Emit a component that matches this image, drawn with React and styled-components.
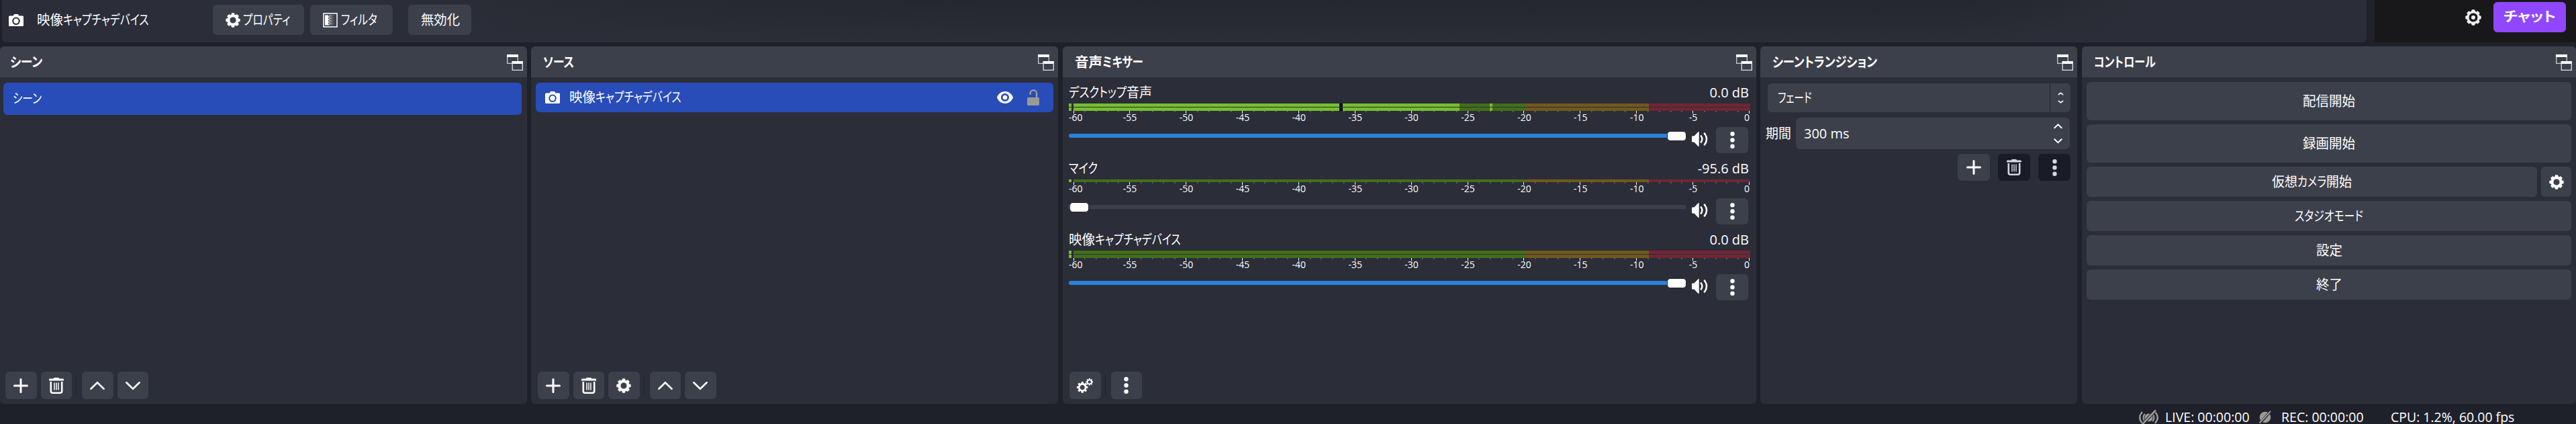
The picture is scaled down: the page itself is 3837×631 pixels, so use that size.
import React, { useLayoutEffect, useRef, useState } from 'react';
import styled, { createGlobalStyle } from 'styled-components';

const c = {
  window: '#1f212a',
  panel: '#2b2d38',
  button: '#3c404b',
  dark: '#191b26',
  accent: '#284cb8',
  slider: '#2a82da',
  text: '#ffffff',
  muted: '#9a9996',
};

const GlobalStyle = createGlobalStyle`
  * { box-sizing: border-box; }
  body {
    margin: 0;
    background: ${c.window};
    color: ${c.text};
    font-family: "Open Sans", "Noto Sans CJK JP", sans-serif;
    font-size: 20px;
    line-height: 20px;
    overflow: hidden;
  }
`;

/* ---------- text ---------- */

const Line = styled.span`
  display: flex;
  flex: none;
  white-space: nowrap;
  font-weight: ${(p) => (p.$bold ? 700 : 400)};
  margin-left: ${(p) => p.$left || 0}px;
`;

const Slot = styled.span`
  flex: none;
  width: ${(p) => p.$width}px;
`;

const Glyphs = styled.span`
  display: inline-block;
  transform-origin: 0 50%;
  font-feature-settings: "palt";
`;

function Run({ text, width }) {
  const ref = useRef(null);
  const [scale, setScale] = useState(1);
  useLayoutEffect(() => {
    setScale(width / ref.current.offsetWidth);
  }, [text, width]);
  return (
    <Slot $width={width}>
      <Glyphs ref={ref} style={{ transform: `scaleX(${scale})` }}>{text}</Glyphs>
    </Slot>
  );
}

function Label({ runs, bold, left }) {
  return (
    <Line $bold={bold} $left={left}>
      {runs.map(([text, width]) => <Run key={text} text={text} width={width} />)}
    </Line>
  );
}

/* ---------- icons ---------- */

const Svg = styled.svg`
  display: block;
  flex: none;
  overflow: visible;
`;

function gearPath(cx, cy, outer, root, hole) {
  const pts = [];
  const teeth = 8;
  for (let i = 0; i < teeth; i += 1) {
    const a = (i * 2 * Math.PI) / teeth - Math.PI / 2;
    [[-0.27, root], [-0.17, outer], [0.17, outer], [0.27, root]].forEach(([d, r]) => {
      pts.push(`${(cx + r * Math.cos(a + d)).toFixed(2)} ${(cy + r * Math.sin(a + d)).toFixed(2)}`);
    });
  }
  const ring = `M${cx - hole} ${cy}a${hole} ${hole} 0 1 0 ${hole * 2} 0a${hole} ${hole} 0 1 0 ${-hole * 2} 0Z`;
  return `M${pts.join('L')}Z${ring}`;
}

const Gear = ({ size = 22 }) => (
  <Svg width={size} height={size} viewBox="0 0 22 22">
    <path fill="#fff" fillRule="evenodd" stroke="#fff" strokeWidth=".8" strokeLinejoin="round" d={gearPath(11, 11, 10.4, 8.2, 5)} />
  </Svg>
);

const Gears = () => (
  <Svg width="24" height="22" viewBox="0 0 24 22">
    <path fill="#fff" fillRule="evenodd" d={gearPath(8.2, 13.4, 8.4, 6.3, 3.5)} />
    <path fill="#fff" fillRule="evenodd" d={gearPath(18.8, 5.4, 5.4, 4, 2.2)} />
  </Svg>
);

const ChatGear = () => (
  <Svg width="24" height="24" viewBox="0 0 24 24">
    <path fill="#efeff1" fillRule="evenodd" stroke="#efeff1" strokeWidth="1" strokeLinejoin="round" d={gearPath(12, 12, 11.3, 9.3, 7)} />
    <circle cx="12" cy="12" r="3" fill="#efeff1" />
  </Svg>
);

const Camera = () => (
  <Svg width="22" height="18" viewBox="0 0 22 18">
    <path fill="#fff" fillRule="evenodd" d="M6.5 2.500L8 .3Q8.300 0 8.800 0h4.400q.5 0 .8.300L15.500 2.500H20.500Q22 2.500 22 4v12.500Q22 18 20.500 18h-19Q0 18 0 16.500V4Q0 2.500 1.500 2.500ZM5.200 10.300a5.800 5.800 0 1 0 11.600 0a5.800 5.800 0 1 0-11.600 0Z" />
    <circle cx="11" cy="10.300" r="3.700" fill="#fff" />
  </Svg>
);

const Filter = () => (
  <Svg width="22" height="22" viewBox="0 0 22 22">
    <rect x="1" y="1" width="20" height="20" fill="none" stroke="#fff" strokeWidth="1.500" />
    <rect x="3" y="3.500" width="5" height="15" fill="#fff" />
    {[0, 1, 2, 3, 4, 5, 6, 7].map((r) => (
      <g key={r} fill="#fff">
        <rect x={r % 2 ? 8 : 9.500} y={3.500 + r * 1.900} width="1.700" height="1.700" opacity=".9" />
        <rect x={r % 2 ? 11 : 12.500} y={3.500 + r * 1.900} width="1.500" height="1.500" opacity=".6" />
        <rect x={r % 2 ? 14 : 15.300} y={3.500 + r * 1.900} width="1.300" height="1.300" opacity=".3" />
      </g>
    ))}
  </Svg>
);

const Popout = () => (
  <Svg width="24" height="24" viewBox="0 0 24 24">
    <path fill="none" stroke="#c9cbd0" strokeWidth="1.300" d="M.7 1v12.400H8M16.300 1v9" />
    <path fill="#fff" d="M0 0h17v4H0zM7.500 10H24v4H7.500z" />
    <path fill="none" stroke="#e2e3e6" strokeWidth="1.300" d="M8.200 12v11.300h15.100V12" />
  </Svg>
);

const Eye = () => (
  <Svg width="24" height="18" viewBox="0 0 24 18">
    <path fill="#fff" fillRule="evenodd" d="M12 0C18 0 22.300 4 24 9C22.300 14 18 18 12 18S1.700 14 0 9C1.700 4 6 0 12 0ZM5.900 9a6.100 6.100 0 1 0 12.200 0a6.100 6.100 0 1 0-12.200 0Z" />
    <circle cx="12" cy="9" r="3.300" fill="#fff" />
  </Svg>
);

const Unlock = () => (
  <Svg width="18" height="24" viewBox="0 0 18 24">
    <rect y="12" width="18" height="12" rx="1.500" fill={c.muted} />
    <path fill="none" stroke={c.muted} strokeWidth="2.600" d="M4.500 8V5.800a4.800 4.500 0 0 1 9.600 0V13" />
  </Svg>
);

const Plus = () => (
  <Svg width="22" height="22" viewBox="0 0 22 22">
    <path stroke="#fff" strokeWidth="3" strokeLinecap="round" d="M11 1.500v19M1.500 11h19" />
  </Svg>
);

const Trash = ({ color = '#fff' }) => (
  <Svg width="22" height="24" viewBox="0 0 22 24">
    <path fill={color} d="M6.500 1.500L8 0h6l1.500 1.500H21q1 0 1 1.500v1.500H0V3q0-1.500 1-1.500Z" />
    <path fill="none" stroke={color} strokeWidth="2.600" d="M2.800 6v14q0 2.800 2.800 2.800h10.800q2.800 0 2.800-2.800V6" />
    <path stroke={color} strokeWidth="1.500" d="M8 7.500v11M11 7.500v11M14 7.500v11" />
  </Svg>
);

const Dots = ({ color = '#fff' }) => (
  <Svg width="7" height="25" viewBox="0 0 7 25">
    {[3.3, 12.5, 21.7].map((y) => <circle key={y} cx="3.500" cy={y} r="3.200" fill={color} />)}
  </Svg>
);

const Chevron = ({ down, width = 22, height = 12, weight = 2.6 }) => (
  <Svg width={width} height={height}>
    <path
      fill="none"
      stroke="#fff"
      strokeWidth={weight}
      strokeLinecap="round"
      d={down
        ? `M1.300 1.300L${width / 2} ${height - 1.3}L${width - 1.3} 1.300`
        : `M1.300 ${height - 1.3}L${width / 2} 1.300L${width - 1.3} ${height - 1.3}`}
    />
  </Svg>
);

const Speaker = () => (
  <Svg width="24" height="22" viewBox="0 0 24 22">
    <path fill="#fff" d="M0 7.500Q0 6.500 1 6.500H3.500L9.500.3Q10.700-.3 10.700 1v20q0 1.300-1.200.7L3.500 15.500H1Q0 15.500 0 14.500Z" />
    <path fill="none" stroke="#fff" strokeWidth="2.500" d="M13.200 5.500q4.300 5.500 0 11M18.300 1.800q7.500 9.200 0 18.400" />
  </Svg>
);

const LiveOff = () => (
  <Svg width="29" height="22" viewBox="0 0 29 22">
    <g fill="none" stroke={c.muted} strokeWidth="2.300">
      <path d="M5 3q-7.500 8.500 0 17M8.800 6q-4.500 5.500 0 11M24 3q7.500 8.500 0 17M20.200 6q4.500 5.500 0 11" />
    </g>
    <circle cx="14.500" cy="11.500" r="6" fill={c.muted} />
    <path stroke={c.window} strokeWidth="4.600" d="M5 22L25 0" />
    <path stroke={c.muted} strokeWidth="2.600" d="M4 22.500L25 .5" />
  </Svg>
);

const RecOff = () => (
  <Svg width="18" height="18" viewBox="0 0 18 18">
    <circle cx="9" cy="9" r="8.300" fill={c.muted} />
    <path stroke={c.window} strokeWidth="3.800" d="M1 18L17 0" />
    <path stroke={c.muted} strokeWidth="2" d="M.5 17.500L17 0" />
  </Svg>
);

/* ---------- frame ---------- */

const Window = styled.div`
  display: flex;
  flex-direction: column;
  width: 3837px;
  height: 631px;
  overflow: hidden;
  background: ${c.window};
`;

const TopRow = styled.div`
  display: flex;
  height: 63px;
  padding-left: 3px;
`;

const SourceBar = styled.div`
  display: flex;
  align-items: flex-start;
  width: 3522px;
  padding: 7px 0 0 10px;
  border-radius: 0 0 6px 6px;
  background:
    linear-gradient(to bottom, transparent, ${c.panel}),
    linear-gradient(to right, ${c.panel} 560px, #272a31 1000px, #24272d 1500px, #24272d 2900px, ${c.panel} 3200px);
`;

const SourceTitle = styled.div`
  display: flex;
  align-items: center;
  gap: 20px;
  width: 304px;
  height: 45px;
`;

const ToolButton = styled.div`
  display: flex;
  align-items: center;
  width: ${(p) => p.$width}px;
  height: 45px;
  margin-right: ${(p) => p.$after || 0}px;
  padding-left: 19px;
  gap: 4px;
  border-radius: 6px;
  background: ${c.button};
`;

const ChatArea = styled.div`
  display: flex;
  justify-content: flex-end;
  width: 300px;
  margin-left: auto;
  padding: 3px 15px 0 0;
  gap: 18px;
  background: #18181a;
`;

const ChatIcon = styled.div`
  padding-top: 11px;
`;

const ChatButton = styled.div`
  display: flex;
  align-items: center;
  justify-content: center;
  width: 108px;
  height: 45px;
  padding-bottom: 2px;
  border-radius: 6px;
  background: #9147ff;
`;

const Docks = styled.div`
  display: flex;
  height: 532px;
  margin-top: 6px;
  gap: 6px;
`;

const DockBox = styled.section`
  display: flex;
  flex: none;
  flex-direction: column;
  width: ${(p) => p.$width}px;
  margin-left: ${(p) => p.$before || 0}px;
  border-radius: 6px;
  overflow: hidden;
  background: ${c.panel};
`;

const DockHeader = styled.header`
  display: flex;
  align-items: center;
  justify-content: space-between;
  height: 46px;
  padding: 1px 6px 0 ${(p) => p.$left}px;
  background: ${c.button};
`;

const DockBody = styled.div`
  display: flex;
  flex: 1;
  flex-direction: column;
  padding: ${(p) => p.$pad};
`;

function Dock({ width, before, title, left = 18, pad, children }) {
  return (
    <DockBox $width={width} $before={before}>
      <DockHeader $left={left}>
        <Label bold runs={title} />
        <Popout />
      </DockHeader>
      <DockBody $pad={pad}>{children}</DockBody>
    </DockBox>
  );
}

const Item = styled.div`
  display: flex;
  align-items: center;
  height: ${(p) => p.$height}px;
  padding: 0 21px 0 14px;
  border-radius: 6px;
  background: ${c.accent};
`;

const ItemTools = styled.div`
  display: flex;
  align-items: center;
  gap: 21px;
  margin-left: auto;
`;

const Toolbar = styled.div`
  display: flex;
  align-items: center;
  gap: 6px;
  height: 41px;
  margin-top: auto;
  padding-left: ${(p) => p.$left}px;
`;

const IconButton = styled.div`
  display: flex;
  align-items: center;
  justify-content: center;
  flex: none;
  width: ${(p) => p.$width || 46.5}px;
  height: ${(p) => p.$height || 41}px;
  border-radius: 6px;
  background: ${(p) => (p.$dark ? c.dark : c.button)};
`;

const Divider = styled.div`
  width: 1px;
  height: 31px;
  margin: 0 2px 0 0;
  background: ${c.window};
`;

/* ---------- mixer ---------- */

const Channel = styled.div`
  display: flex;
  flex-direction: column;
  margin-bottom: 12px;
`;

const ChannelHead = styled.div`
  display: flex;
  align-items: center;
  justify-content: space-between;
  height: 27px;
  padding: 0 2px 5px 0;
`;

const ChannelFoot = styled.div`
  display: flex;
  height: 39px;
  margin-top: 3px;
`;

const Track = styled.div`
  display: flex;
  align-items: center;
  width: 920px;
  height: 14px;
  margin-top: ${(p) => p.$top}px;
`;

const Fill = styled.div`
  height: 6px;
  width: ${(p) => p.$width}px;
  border-radius: 3px 0 0 3px;
  background: ${c.slider};
`;

const Rest = styled.div`
  flex: 1;
  height: 6px;
  border-radius: 0 3px 3px 0;
  background: ${(p) => (p.$hidden ? 'transparent' : c.button)};
`;

const Handle = styled.div`
  width: 29px;
  height: 15px;
  border: 1px solid ${c.window};
  border-radius: 5px;
  background: #fff;
`;

const SpeakerBox = styled.div`
  width: 44px;
  padding: 7px 0 0 8px;
`;

const Scale = styled.svg`
  display: block;
  flex: none;
  font-family: "Open Sans", sans-serif;
  font-size: 14px;
`;

function Meter({ stereo, level, peak, mark }) {
  const rows = stereo ? [[0, 5], [6, 5]] : [[0, 4]];
  const h = stereo ? 11 : 4;
  const ticks = [];
  for (let db = -60; db <= 0; db += 1) {
    const x = 1013 + db * 16.78;
    const major = db % 5 === 0;
    ticks.push(
      <rect
        key={db}
        x={Math.round(db === -60 ? 7 : x)}
        y={h}
        width={major ? 1 : 1.5}
        height={major ? 4 : 2}
        fill={major ? '#fff' : '#62646b'}
      />,
    );
  }
  return (
    <Scale width="1015" height={h + 21}>
      {rows.map(([y, t]) => (
        <g key={y}>
          <rect x="0" y={y} width="4" height={t} fill="#74be2e" />
          <rect x="7" y={y} width="672" height={t} fill="#426f19" />
          <rect x="679" y={y} width="185" height={t} fill="#70591d" />
          <rect x="864" y={y} width="151" height={t} fill="#702634" />
          {level && <rect x="7" y={y} width={level - 7} height={t} fill="#74be2e" />}
          {peak && <rect x={peak} y={y} width="4" height={t} fill="#74be2e" />}
          {mark && <rect x={mark} y={y} width="5" height={t} fill="#000" />}
        </g>
      ))}
      {ticks}
      {Array.from({ length: 13 }, (_, i) => i * 5 - 60).map((db) => {
        const x = db === -60 ? 0 : db === 0 ? 1014 : 1013 + db * 16.78 + 1;
        const anchor = db === -60 ? 'start' : db === 0 ? 'end' : 'middle';
        return <text key={db} x={x} y={h + 15.3} fill="#fff" textAnchor={anchor}>{db}</text>;
      })}
    </Scale>
  );
}

function MixerChannel({ name, volume, meter, filled, offset }) {
  return (
    <Channel>
      <ChannelHead>
        <Label runs={name} />
        <Line>{volume}</Line>
      </ChannelHead>
      <Meter {...meter} />
      <ChannelFoot>
        <Track $top={offset}>
          <Fill $width={filled} />
          <Handle />
          <Rest $hidden={filled > 100} />
        </Track>
        <SpeakerBox><Speaker /></SpeakerBox>
        <IconButton $width={48} $height={39}><Dots /></IconButton>
      </ChannelFoot>
    </Channel>
  );
}

/* ---------- transitions ---------- */

const Combo = styled.div`
  display: flex;
  height: 43px;
  margin-left: 11px;
  width: 451px;
  border-radius: 6px;
  background: ${c.button};
`;

const ComboValue = styled.div`
  display: flex;
  align-items: center;
  flex: 1;
  padding-left: 15px;
  border-right: 1px solid ${c.window};
`;

const Steppers = styled.div`
  display: flex;
  flex-direction: column;
  align-items: center;
  justify-content: center;
  gap: ${(p) => p.$gap}px;
  width: ${(p) => p.$width}px;
`;

const DurationRow = styled.div`
  display: flex;
  align-items: center;
  height: 47px;
  margin: 8px 0 0 8px;
  gap: 7px;
`;

const Spin = styled.div`
  display: flex;
  align-items: center;
  justify-content: space-between;
  width: 408px;
  height: 47px;
  padding-left: 12px;
  border-radius: 6px;
  background: ${c.button};
`;

const TransitionTools = styled.div`
  display: flex;
  justify-content: flex-end;
  gap: 12px;
  margin: 7px 10px 0 0;
`;

/* ---------- controls ---------- */

const Controls = styled.div`
  display: flex;
  flex-direction: column;
  gap: 6px;
`;

const ControlRow = styled.div`
  display: flex;
  gap: 6px;
`;

const ControlButton = styled.div`
  display: flex;
  align-items: center;
  justify-content: center;
  flex: 1;
  height: ${(p) => p.$height || 45}px;
  border-radius: 6px;
  background: ${c.button};
`;

/* ---------- status bar ---------- */

const StatusBar = styled.footer`
  display: flex;
  align-items: center;
  height: 30px;
  padding: 9px 92px 0 0;
  justify-content: flex-end;
`;

const Status = styled.div`
  display: flex;
  align-items: center;
  gap: ${(p) => p.$gap}px;
  margin-right: ${(p) => p.$after || 0}px;
`;

export default function App() {
  const device = [['映像', 39], ['キャプチャデバイス', 128]];
  return (
    <Window>
      <GlobalStyle />
      <TopRow>
        <SourceBar>
          <SourceTitle><Camera /><Label runs={device} /></SourceTitle>
          <ToolButton $width={136} $after={9}><Gear /><Label runs={[['プロパティ', 70]]} /></ToolButton>
          <ToolButton $width={123} $after={23}><Filter /><Label left={1} runs={[['フィルタ', 54]]} /></ToolButton>
          <ToolButton $width={94}><Label runs={[['無効化', 58]]} /></ToolButton>
        </SourceBar>
        <ChatArea>
          <ChatIcon><ChatGear /></ChatIcon>
          <ChatButton><Label bold runs={[['チャット', 78]]} /></ChatButton>
        </ChatArea>
      </TopRow>

      <Docks>
        <Dock width={785} left={15} title={[['シーン', 48]]} pad="8px 8px 7px 5px">
          <Item $height={48}><Label runs={[['シーン', 43]]} /></Item>
          <Toolbar $left={3}>
            <IconButton><Plus /></IconButton>
            <IconButton><Trash /></IconButton>
            <Divider />
            <IconButton><Chevron /></IconButton>
            <IconButton><Chevron down /></IconButton>
          </Toolbar>
        </Dock>

        <Dock width={785} title={[['ソース', 46]]} pad="8px 7px 7px 7px">
          <Item $height={44}>
            <Camera />
            <Label left={14} runs={device} />
            <ItemTools><Eye /><Unlock /></ItemTools>
          </Item>
          <Toolbar $left={3}>
            <IconButton><Plus /></IconButton>
            <IconButton><Trash /></IconButton>
            <IconButton><Gear /></IconButton>
            <Divider />
            <IconButton><Chevron /></IconButton>
            <IconButton><Chevron down /></IconButton>
          </Toolbar>
        </Dock>

        <Dock width={1033} before={1} title={[['音声', 41], ['ミキサー', 61]]} pad="12px 9px 7px 9px">
          <MixerChannel
            name={[['デスクトップ', 86], ['音声', 38]]}
            volume="0.0 dB"
            filled={891}
            offset={6}
            meter={{ stereo: true, level: 582, peak: 627, mark: 403 }}
          />
          <MixerChannel name={[['マイク', 43]]} volume="-95.6 dB" filled={1} offset={6} meter={{}} />
          <MixerChannel
            name={device}
            volume="0.0 dB"
            filled={891}
            offset={6}
            meter={{ stereo: true }}
          />
          <Toolbar $left={1}>
            <IconButton><Gears /></IconButton>
            <Divider />
            <IconButton><Dots /></IconButton>
          </Toolbar>
        </Dock>

        <Dock width={472} title={[['シーントランジション', 156]]} pad="9px 0 0 0">
          <Combo>
            <ComboValue><Label runs={[['フェード', 51]]} /></ComboValue>
            <Steppers $gap={7} $width={30}>
              <Chevron width={9} height={5} weight={1.5} />
              <Chevron down width={9} height={5} weight={1.5} />
            </Steppers>
          </Combo>
          <DurationRow>
            <Label runs={[['期間', 38]]} />
            <Spin>
              <Line>300 ms</Line>
              <Steppers $gap={14} $width={36}>
                <Chevron width={13} height={7.5} weight={2} />
                <Chevron down width={13} height={7.5} weight={2} />
              </Steppers>
            </Spin>
          </DurationRow>
          <TransitionTools>
            <IconButton $width={48} $height={40}><Plus /></IconButton>
            <IconButton $width={48} $height={40} $dark><Trash color="#d4d6e4" /></IconButton>
            <IconButton $width={48} $height={40} $dark><Dots color="#d4d6e4" /></IconButton>
          </TransitionTools>
        </Dock>

        <Dock width={736} before={1} title={[['コントロール', 92]]} pad="7px 7px 0 7px">
          <Controls>
            <ControlRow><ControlButton $height={57}><Label runs={[['配信開始', 78]]} /></ControlButton></ControlRow>
            <ControlRow><ControlButton $height={57}><Label runs={[['録画開始', 78]]} /></ControlButton></ControlRow>
            <ControlRow>
              <ControlButton><Label runs={[['仮想', 38], ['カメラ', 43], ['開始', 38]]} /></ControlButton>
              <IconButton $width={45} $height={45}><Gear /></IconButton>
            </ControlRow>
            <ControlRow><ControlButton><Label runs={[['スタジオモード', 102]]} /></ControlButton></ControlRow>
            <ControlRow><ControlButton><Label runs={[['設定', 39]]} /></ControlButton></ControlRow>
            <ControlRow><ControlButton><Label runs={[['終了', 39]]} /></ControlButton></ControlRow>
          </Controls>
        </Dock>
      </Docks>

      <StatusBar>
        <Status $gap={10} $after={14}><LiveOff /><Label runs={[['LIVE: 00:00:00', 126]]} /></Status>
        <Status $gap={15} $after={40}><RecOff /><Label runs={[['REC: 00:00:00', 123]]} /></Status>
        <Status $gap={0}><Label runs={[['CPU: 1.2%, 60.00 fps', 184]]} /></Status>
      </StatusBar>
    </Window>
  );
}
